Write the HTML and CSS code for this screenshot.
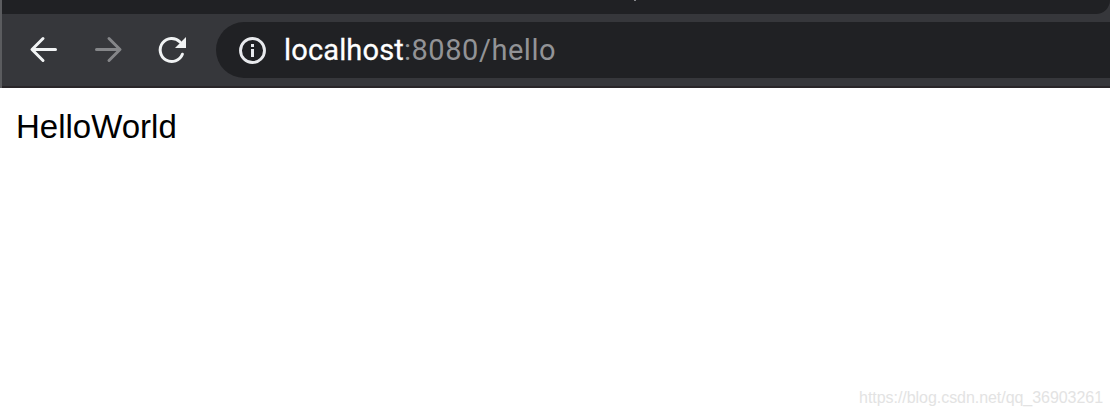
FILE: index.html
```html
<!DOCTYPE html>
<html lang="en">
<head>
<meta charset="utf-8">
<title>localhost:8080/hello</title>
<link rel="stylesheet" href="styles.css">
</head>
<body>
<div class="window">
  <header class="chrome">
    <div class="tabs"><div class="tab-strip"><span class="tab-mark"></span></div></div>
    <div class="toolbar">
      <nav class="controls">
        <svg class="icon" viewBox="0 0 32 32"><path d="M27.500 15.500H4.500M15 4.500L4 15.500l11 11"/></svg>
        <svg class="icon forward" viewBox="0 0 32 32"><path d="M4.500 15.500h23M17 4.500l11 11-11 11"/></svg>
        <svg class="icon" viewBox="0 0 32 32"><path d="M26.400 20.200A11.500 11.500 0 1 1 24 8"/><path class="fill" d="M30 3v11H19z"/></svg>
      </nav>
      <div class="address">
        <svg class="info" viewBox="0 0 28 28"><circle cx="14.500" cy="14.500" r="12"/><path d="M13 8h3v3h-3zM13 13h3v8h-3z"/></svg>
        <span class="url"><span class="host">localhost</span><span class="path">:8080/hello</span></span>
      </div>
    </div>
  </header>
  <main class="page">
    <p class="message">HelloWorld</p>
    <footer class="watermark">https://blog.csdn.net/qq_36903261</footer>
  </main>
</div>
</body>
</html>
```
FILE: styles.css
```css
* { box-sizing: border-box; }
body { margin: 0; background: #fff; }
.window { display: flex; flex-direction: column; height: 416px; overflow: hidden; }
.chrome { height: 88px; border-left: 2px solid #5b5c5f; background: #36373b; }
.tabs { height: 14px; }
.tab-strip { height: 14px; padding-left: 632px; background: #202124; border-bottom-right-radius: 14px; }
.tab-mark { display: block; width: 2px; height: 1px; background: #85868a; }
.toolbar { display: flex; height: 74px; padding: 8px 0; gap: 28px; border-bottom: 2px solid #292629; }
.controls { display: flex; gap: 32px; padding: 12px 0 0 26px; }
.icon { width: 32px; height: 32px; fill: none; stroke: #f1f3f4; stroke-width: 3; stroke-linecap: round; stroke-linejoin: round; }
.forward { stroke: #858689; }
.icon .fill { fill: #f1f3f4; stroke: none; }
.address { display: flex; align-items: center; flex: 1; height: 56px; padding-left: 22px; gap: 18px; background: #202124; border-radius: 28px 0 0 28px; }
.info { width: 28px; height: 28px; fill: none; stroke: #e8eaed; stroke-width: 2.900; }
.info path { fill: #e8eaed; stroke: none; }
.url { font: 29px/36px Roboto, sans-serif; white-space: nowrap; }
.host { color: #fff; letter-spacing: 0.15px; -webkit-text-stroke: 0.3px #fff; }
.path { color: #929396; letter-spacing: 0.55px; }
.page { display: flex; flex: 1; flex-direction: column; justify-content: space-between; padding: 20px 7px 8px 16px; font-family: "Liberation Sans", Arial, sans-serif; }
.message { margin: 0; color: #000; font-size: 33px; line-height: 38px; }
.watermark { align-self: flex-end; color: #e3e3e3; font-size: 16px; line-height: 20px; letter-spacing: -0.05px; }
```
